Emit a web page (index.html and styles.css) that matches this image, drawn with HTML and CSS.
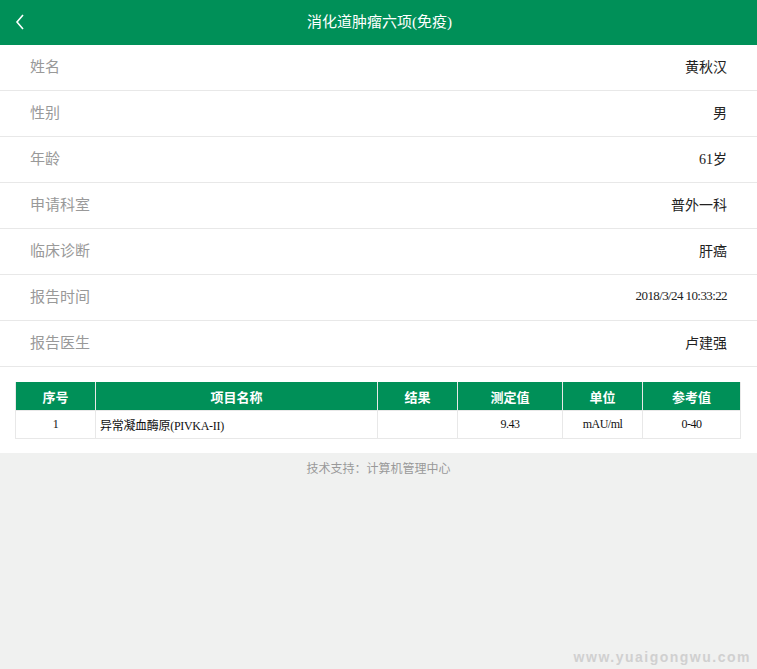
FILE: index.html
```html
<!DOCTYPE html>
<html lang="zh">
<head>
<meta charset="utf-8">
<title>消化道肿瘤六项(免疫)</title>
<link rel="stylesheet" href="styles.css">
</head>
<body>
<header class="topbar">
  <svg class="back" width="10" height="16" viewBox="0 0 10 16"><path d="M8 1 L2 8 L8 15" fill="none" stroke="#fff" stroke-width="1.6"/></svg>
  <h1 class="title">消化道肿瘤六项(免疫)</h1>
</header>
<main>
  <ul class="info">
    <li class="row"><span class="label">姓名</span><span class="value">黄秋汉</span></li>
    <li class="row"><span class="label">性别</span><span class="value">男</span></li>
    <li class="row"><span class="label">年龄</span><span class="value">61岁</span></li>
    <li class="row"><span class="label">申请科室</span><span class="value">普外一科</span></li>
    <li class="row"><span class="label">临床诊断</span><span class="value">肝癌</span></li>
    <li class="row"><span class="label">报告时间</span><span class="value small">2018/3/24 10:33:22</span></li>
    <li class="row"><span class="label">报告医生</span><span class="value">卢建强</span></li>
  </ul>
  <section class="results">
    <table class="grid">
      <colgroup>
        <col class="c1"><col class="c2"><col class="c3"><col class="c4"><col class="c5"><col class="c6">
      </colgroup>
      <thead>
        <tr><th>序号</th><th>项目名称</th><th>结果</th><th>测定值</th><th>单位</th><th>参考值</th></tr>
      </thead>
      <tbody>
        <tr><td>1</td><td class="name">异常凝血酶原(PIVKA-II)</td><td></td><td>9.43</td><td>mAU/ml</td><td>0-40</td></tr>
      </tbody>
    </table>
  </section>
  <footer class="support">技术支持：计算机管理中心</footer>
</main>
<div class="watermark">www.yuaigongwu.com</div>
</body>
</html>
```
FILE: styles.css
```css
html, body {
  margin: 0;
  padding: 0;
  height: 100%;
}
body {
  background: #f0f1f0;
  font-family: "Noto Sans CJK SC", "Liberation Sans", sans-serif;
  position: relative;
  overflow: hidden;
}
.topbar {
  height: 45px;
  background: #009058;
  display: flex;
  align-items: center;
  justify-content: center;
  position: relative;
}
.back {
  position: absolute;
  left: 15px;
  top: 14px;
}
.title {
  margin: 0;
  font-family: "Liberation Serif", "Noto Sans CJK SC", sans-serif;
  font-size: 15px;
  font-weight: normal;
  color: #fff;
  line-height: 45px;
  padding-left: 2px;
}
main {
  display: block;
}
.info {
  list-style: none;
  margin: 0;
  padding: 0;
  background: #fff;
}
.row {
  border-bottom: 1px solid #e8e8e8;
  display: flex;
  align-items: center;
  justify-content: space-between;
  padding: 0 30px 4px;
  box-sizing: border-box;
  height: 46px;
}
.label {
  font-size: 15px;
  color: #999;
}
.value {
  font-family: "Liberation Serif", "Noto Sans CJK SC", serif;
  font-size: 14px;
  color: #222;
}
.value.small {
  font-size: 13px;
  letter-spacing: -0.6px;
}
.results {
  background: #fff;
  padding: 15px 17px 14px 15px;
}
.grid {
  width: 100%;
  border-collapse: collapse;
  table-layout: fixed;
  font-family: "Liberation Serif", "Noto Sans CJK SC", serif;
}
.c1 { width: 80px; }
.c2 { width: 282px; }
.c3 { width: 80px; }
.c4 { width: 105px; }
.c5 { width: 80px; }
.c6 { width: 98px; }
.grid th {
  background: #009058;
  color: #fff;
  font-family: "Noto Sans CJK SC", sans-serif;
  font-weight: bold;
  font-size: 13px;
  height: 28px;
  padding: 0;
  border: 1px solid #e8e8e8;
  border-top: 0;
}
.grid td {
  height: 27px;
  padding: 0;
  font-size: 12px;
  color: #111;
  text-align: center;
  border: 1px solid #e8e8e8;
  letter-spacing: -0.5px;
}
.grid td.name {
  text-align: left;
  padding-left: 4px;
  font-size: 12px;
  letter-spacing: -0.3px;
}
.support {
  text-align: center;
  font-size: 12px;
  color: #999;
  padding-top: 6px;
}
.watermark {
  position: absolute;
  right: 6px;
  bottom: 4px;
  font-family: "Liberation Sans", sans-serif;
  font-weight: bold;
  font-size: 14px;
  color: #d0d0d0;
  letter-spacing: 1.5px;
}
```
